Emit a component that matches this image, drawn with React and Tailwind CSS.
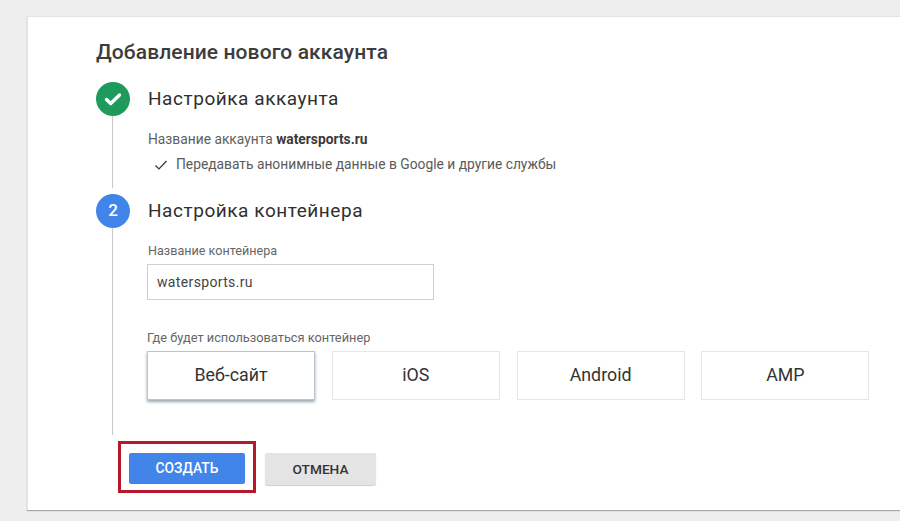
import React from 'react';

const targets = ['Веб-сайт', 'iOS', 'Android', 'AMP'];

function StepCircle({ className, children }) {
  return (
    <div className={`w-[34px] h-[34px] rounded-full flex items-center justify-center shrink-0 text-white ${className}`}>
      {children}
    </div>
  );
}

export default function App() {
  return (
    <div className="w-[900px] h-[521px] overflow-hidden bg-[#eeeeee] pt-[16px] pl-[27px]" style={{ fontFamily: 'Roboto, sans-serif' }}>
      <div className="w-[873px] h-[494px] bg-white border-t border-l border-[#e4e4e4] shadow-[0_1px_1px_#a8a8a8] pl-[68px]">
        <h1 className="text-[21px] leading-[24px] font-medium tracking-[0.1px] text-[#3c3c3c] pt-[23px]">Добавление нового аккаунта</h1>

        {/* Step 1 */}
        <div className="flex gap-[17px] mt-[18px]">
          <div className="flex flex-col items-center w-[34px]">
            <StepCircle className="bg-[#1e9b5c]">
              <svg width="22" height="22" viewBox="0 0 22 22" fill="none">
                <path d="M4.5 11.5l4.2 4 8.8-8.5" stroke="#fff" strokeWidth="3.4" strokeLinecap="round" strokeLinejoin="round" />
              </svg>
            </StepCircle>
            <div className="w-px h-[72px] mr-[2px] bg-[#c8c8c8]" />
          </div>
          <div className="pl-[1px]">
            <div className="h-[34px] flex items-center text-[19px] tracking-[0.55px] text-[#2f2f2f]">Настройка аккаунта</div>
            <p className="mt-[15px] text-[13.8px] leading-[16px] text-[#5f5f5f]">
              Название аккаунта <b className="font-bold text-[#3a3a3a]">watersports.ru</b>
            </p>
            <div className="flex items-center mt-[8px] pl-[6px] text-[13.8px] leading-[18px] text-[#5a5a5a]">
              <svg width="14" height="14" viewBox="0 0 14 14" fill="none" className="mr-[8px] mt-[1px]">
                <path d="M1.5 7.5l3.5 3.5 7.5-8" stroke="#333" strokeWidth="1.2" />
              </svg>
              Передавать анонимные данные в Google и другие службы
            </div>
          </div>
        </div>

        {/* Step 2 */}
        <div className="flex gap-[17px] mt-[6px]">
          <div className="flex flex-col items-center w-[34px]">
            <StepCircle className="bg-[#4285ea] text-[17px] font-medium">2</StepCircle>
            <div className="w-px h-[207px] mr-[2px] bg-[#c8c8c8]" />
          </div>
          <div>
            <div className="h-[34px] pl-[1px] flex items-center text-[19px] tracking-[0.55px] text-[#2f2f2f]">Настройка контейнера</div>
            <label className="block mt-[15px] pl-[1px] text-[12.6px] leading-[16px] text-[#666666]">Название контейнера</label>
            <div className="mt-[5px] w-[287px] h-[36px] border border-[#cfcfcf] pl-[9px] flex items-center text-[14px] tracking-[0.35px] text-[#444444]">watersports.ru</div>
            <label className="block mt-[30px] text-[12.8px] leading-[16px] text-[#666666]">Где будет использоваться контейнер</label>
            <div className="flex gap-[16.8px] mt-[5px]">
              {targets.map((t, i) => (
                <div
                  key={t}
                  className={`w-[168px] h-[49px] pb-[1px] flex items-center justify-center text-[17.8px] text-[#333333] ${
                    i === 0
                      ? 'border border-[#b9c4cc] shadow-[0_2px_3px_#9aa5ad]'
                      : 'border border-[#e6e6e6]'
                  }`}
                >
                  {t}
                </div>
              ))}
            </div>
          </div>
        </div>

        {/* Actions */}
        <div className="flex items-center ml-[22px] mt-[6px]">
          <div className="border-[3px] border-[#b9172b] px-[8px] pt-[9px] pb-[6px]">
            <button className="block w-[116px] h-[31px] rounded-[2px] bg-[#4285ea] text-white text-[13.8px] font-medium">СОЗДАТЬ</button>
          </div>
          <button className="ml-[9px] mt-[4px] w-[111px] h-[32px] rounded-[2px] bg-[#e4e4e4] shadow-[0_1px_1px_#d0d0d0] text-[#333333] text-[13.7px] font-medium">ОТМЕНА</button>
        </div>
      </div>
    </div>
  );
}
